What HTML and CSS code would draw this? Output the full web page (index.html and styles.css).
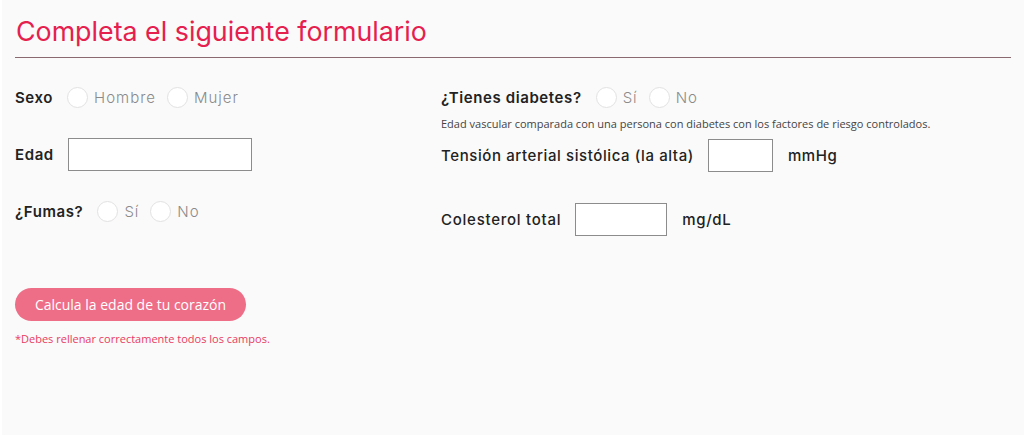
FILE: index.html
```html
<!DOCTYPE html>
<html lang="es">
<head>
  <meta charset="UTF-8" />
  <meta name="viewport" content="width=device-width, initial-scale=1.0" />
  <title>Edad del corazón</title>
  <link rel="stylesheet" href="styles.css">
</head>
<body>
  <div class="page">
    <h1 class="title">Completa el siguiente formulario</h1>

    <form class="form">
      <div class="col col-left">
        <div class="row row-sexo">
          <span class="label">Sexo</span>
          <label class="opt"><span class="radio"></span>Hombre</label>
          <label class="opt"><span class="radio"></span>Mujer</label>
        </div>
        <div class="row row-edad">
          <span class="label">Edad</span>
          <input type="text" class="field field-edad" />
        </div>
        <div class="row row-fumas">
          <span class="label">¿Fumas?</span>
          <label class="opt"><span class="radio"></span>Sí</label>
          <label class="opt"><span class="radio"></span>No</label>
        </div>
      </div>

      <div class="col col-right">
        <div class="row row-diabetes">
          <span class="label">¿Tienes diabetes?</span>
          <label class="opt"><span class="radio"></span>Sí</label>
          <label class="opt"><span class="radio"></span>No</label>
        </div>
        <p class="note">Edad vascular comparada con una persona con diabetes con los factores de riesgo controlados.</p>
        <div class="row row-tension">
          <span class="label label-normal">Tensión arterial sistólica (la alta)</span>
          <input type="text" class="field field-tension" />
          <span class="unit">mmHg</span>
        </div>
        <div class="row row-col">
          <span class="label label-normal">Colesterol total</span>
          <input type="text" class="field field-col" />
          <span class="unit">mg/dL</span>
        </div>
      </div>
    </form>

    <button type="button" class="submit">Calcula la edad de tu corazón</button>
    <p class="error">*Debes rellenar correctamente todos los campos.</p>
  </div>
</body>
</html>
```

FILE: styles.css
```css
body {
  margin: 0;
  background: #fafafa;
  font-family: Inter, "Open Sans", sans-serif;
  color: #222;
}
.page {
  padding: 0 13px;
  height: 435px;
  border-left: 2px solid #fff;
  box-sizing: border-box;
}
.title {
  margin: 0;
  padding: 18px 0 12px 1px;
  font-size: 26.8px;
  font-weight: 400;
  color: #e5204e;
  line-height: 27px;
  border-bottom: 1px solid #8a6a70;
}
.form {
  display: grid;
  grid-template-columns: 426px 1fr;
  padding-top: 23px;
}
.col {
  display: flex;
  flex-direction: column;
}
.row {
  display: flex;
  align-items: center;
  height: 33px;
}
.row-edad {
  margin-top: 24px;
}
.row-fumas {
  margin-top: 24px;
}
.label {
  font-size: 15px;
  font-weight: 600;
  letter-spacing: 0.6px;
  margin-right: 14px;
}
.label-normal {
  font-weight: 500;
  letter-spacing: 0.6px;
}
.row-col .label {
  letter-spacing: 0.75px;
}
.opt {
  display: flex;
  align-items: center;
  font-size: 15px;
  font-weight: 300;
  letter-spacing: 1px;
  color: #8a8a8a;
  margin-right: 11px;
}
.radio {
  width: 19px;
  height: 19px;
  border: 1px solid #e2e2e2;
  border-radius: 50%;
  background: #fff;
  margin-right: 6px;
}
.field {
  height: 33px;
  box-sizing: border-box;
  border: 1px solid #8c8c8c;
  background: #fff;
  margin: 0;
}
.field-edad {
  width: 184px;
}
.field-tension {
  width: 65px;
}
.field-col {
  width: 92px;
}
.unit {
  font-size: 15px;
  font-weight: 500;
  letter-spacing: 0.6px;
  margin-left: 15px;
}
.note {
  margin: 3px 0 0 0;
  font-family: "Open Sans", sans-serif;
  font-size: 11px;
  line-height: 14px;
  color: #444;
}
.row-tension {
  margin-top: 8px;
}
.row-col {
  margin-top: 30px;
  height: 34px;
}
.submit {
  margin-top: 52px;
  height: 33px;
  width: 231px;
  border: none;
  border-radius: 17px;
  background: #ee6e88;
  color: #fff;
  font-family: "Open Sans", sans-serif;
  font-size: 14px;
  cursor: pointer;
}
.error {
  margin: 10px 0 0 0;
  font-family: "Open Sans", sans-serif;
  font-size: 11px;
  color: #e83a62;
}
```
